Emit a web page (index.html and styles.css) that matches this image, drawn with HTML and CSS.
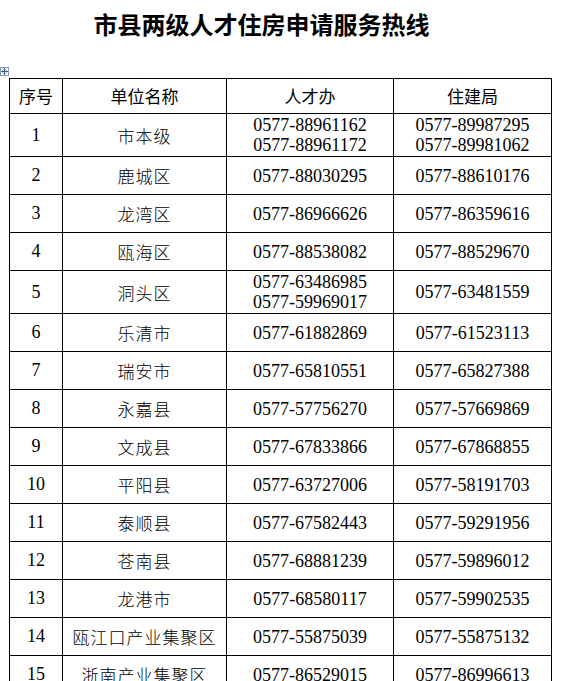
FILE: index.html
```html
<!DOCTYPE html>
<html lang="zh">
<head>
<meta charset="utf-8">
<link rel="stylesheet" href="styles.css">
</head>
<body>
<h1 class="title">市县两级人才住房申请服务热线</h1>
<div class="handle-row">
  <svg class="handle" width="9" height="9" viewBox="0 0 9 9">
    <rect x="0.5" y="0.5" width="8" height="8" fill="#fff" stroke="#8a9bb8" stroke-width="1"/>
    <path d="M4.5 1.5 V7.5 M1.5 4.5 H7.5" stroke="#2b4f8f" stroke-width="1"/>
    <path d="M3.5 2.5 L4.5 1.5 L5.5 2.5 M3.5 6.5 L4.5 7.5 L5.5 6.5 M2.5 3.5 L1.5 4.5 L2.5 5.5 M6.5 3.5 L7.5 4.5 L6.5 5.5" stroke="#2b4f8f" stroke-width="0.8" fill="none"/>
  </svg>
</div>
<table class="hotline">
  <colgroup>
    <col class="c-no"><col class="c-name"><col class="c-tel"><col class="c-tel2">
  </colgroup>
  <thead>
    <tr class="r-head"><th>序号</th><th>单位名称</th><th>人才办</th><th>住建局</th></tr>
  </thead>
  <tbody>
    <tr class="r-double"><td class="no">1</td><td class="name">市本级</td><td class="tel">0577-88961162<br>0577-88961172</td><td class="tel">0577-89987295<br>0577-89981062</td></tr>
    <tr class="r-single"><td class="no">2</td><td class="name">鹿城区</td><td class="tel">0577-88030295</td><td class="tel">0577-88610176</td></tr>
    <tr class="r-single"><td class="no">3</td><td class="name">龙湾区</td><td class="tel">0577-86966626</td><td class="tel">0577-86359616</td></tr>
    <tr class="r-single"><td class="no">4</td><td class="name">瓯海区</td><td class="tel">0577-88538082</td><td class="tel">0577-88529670</td></tr>
    <tr class="r-double"><td class="no">5</td><td class="name">洞头区</td><td class="tel">0577-63486985<br>0577-59969017</td><td class="tel">0577-63481559</td></tr>
    <tr class="r-single"><td class="no">6</td><td class="name">乐清市</td><td class="tel">0577-61882869</td><td class="tel">0577-61523113</td></tr>
    <tr class="r-single"><td class="no">7</td><td class="name">瑞安市</td><td class="tel">0577-65810551</td><td class="tel">0577-65827388</td></tr>
    <tr class="r-single"><td class="no">8</td><td class="name">永嘉县</td><td class="tel">0577-57756270</td><td class="tel">0577-57669869</td></tr>
    <tr class="r-single"><td class="no">9</td><td class="name">文成县</td><td class="tel">0577-67833866</td><td class="tel">0577-67868855</td></tr>
    <tr class="r-single"><td class="no">10</td><td class="name">平阳县</td><td class="tel">0577-63727006</td><td class="tel">0577-58191703</td></tr>
    <tr class="r-single"><td class="no">11</td><td class="name">泰顺县</td><td class="tel">0577-67582443</td><td class="tel">0577-59291956</td></tr>
    <tr class="r-single"><td class="no">12</td><td class="name">苍南县</td><td class="tel">0577-68881239</td><td class="tel">0577-59896012</td></tr>
    <tr class="r-single"><td class="no">13</td><td class="name">龙港市</td><td class="tel">0577-68580117</td><td class="tel">0577-59902535</td></tr>
    <tr class="r-single"><td class="no">14</td><td class="name">瓯江口产业集聚区</td><td class="tel">0577-55875039</td><td class="tel">0577-55875132</td></tr>
    <tr class="r-single"><td class="no">15</td><td class="name">浙南产业集聚区</td><td class="tel">0577-86529015</td><td class="tel">0577-86996613</td></tr>
  </tbody>
</table>
</body>
</html>
```

FILE: styles.css
```css
html, body {
  margin: 0;
  padding: 0;
  background: #fff;
  color: #000;
}
body {
  font-family: "Liberation Serif", "Noto Sans CJK SC", serif;
  overflow: hidden;
}
.title {
  margin: 0;
  height: 52px;
  padding-top: 6px;
  padding-right: 38px;
  box-sizing: border-box;
  text-align: center;
  font-family: "Noto Sans CJK SC", sans-serif;
  font-size: 24px;
  line-height: 36px;
  font-weight: 700;
  letter-spacing: 0;
}
.handle-row {
  height: 26px;
  display: flex;
  align-items: flex-end;
  padding-bottom: 2px;
  box-sizing: border-box;
}
.handle {
  display: block;
}
.hotline {
  margin-left: 9px;
  border-collapse: collapse;
  table-layout: fixed;
  width: 543px;
}
.c-no { width: 53px; }
.c-name { width: 164px; }
.c-tel { width: 167px; }
.c-tel2 { width: 158px; }
.hotline th, .hotline td {
  border: 1px solid #000;
  padding: 0;
  text-align: center;
  vertical-align: middle;
}
.hotline th {
  font-family: "Noto Sans CJK SC", sans-serif;
  font-weight: 400;
  font-size: 17px;
  line-height: 22px;
}
.r-head { height: 35px; }
.r-double { height: 43px; }
.r-single { height: 38px; }
.no {
  font-family: "Liberation Serif", serif;
  font-size: 18px;
  line-height: 21px;
}
.name {
  font-family: "Noto Sans CJK SC", sans-serif;
  font-weight: 300;
  font-size: 17px;
  letter-spacing: 1px;
  line-height: 21px;
}
.tel {
  font-family: "Liberation Serif", serif;
  font-size: 18px;
  line-height: 20px;
}
```
